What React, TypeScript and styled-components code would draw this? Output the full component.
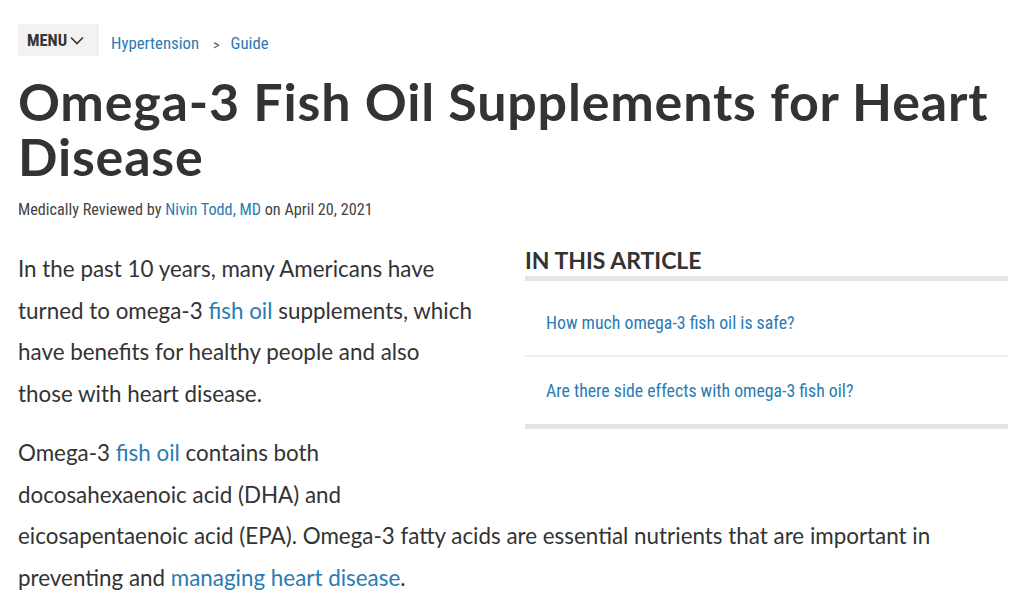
import React from "react";
import styled, { createGlobalStyle } from "styled-components";

const Global = createGlobalStyle`
  html, body { margin: 0; padding: 0; background: #fff; }
  body { font-family: "Lato", "Open Sans", sans-serif; color: #333; }
  a { text-decoration: none; color: #2a7bb3; }
`;

const cond = `"Roboto Condensed", "Roboto", sans-serif`;

const Page = styled.div`
  padding: 24px 16px 0 18px;
`;

const TopBar = styled.div`
  display: flex;
  align-items: center;
`;

const MenuButton = styled.button`
  display: flex;
  align-items: center;
  gap: 3px;
  height: 32px;
  width: 81px;
  padding: 0 0 0 9px;
  border: none;
  background: #f3f2f1;
  font-family: ${cond};
  font-weight: 700;
  font-size: 16.5px;
  color: #333;
  cursor: pointer;
`;

const Crumbs = styled.nav`
  display: flex;
  align-items: center;
  margin-left: 12px;
  font-family: ${cond};
  font-size: 16.8px;
  padding-top: 6px;
`;

const Sep = styled.span`
  margin: 3px 11px 0 14px;
  color: #555;
  font-size: 14px;
`;

const Title = styled.h1`
  margin: 18px 0 0;
  font-family: "Lato", "Open Sans", sans-serif;
  font-weight: 700;
  font-size: 52px;
  letter-spacing: 0.8px;
  line-height: 55px;
  color: #333;
`;

const Byline = styled.div`
  margin-top: 16px;
  font-family: ${cond};
  font-size: 16.2px;
  line-height: 20px;
  color: #444;
`;

const Article = styled.div`
  margin-top: 28px;
`;

const Toc = styled.aside`
  float: right;
  width: 483px;
  margin: -1px 0 46px 50px;
`;

const TocTitle = styled.h2`
  margin: 0;
  padding-bottom: 3px;
  font-family: "Lato", "Open Sans", sans-serif;
  font-weight: 700;
  font-size: 23px;
  line-height: 26px;
  color: #333;
  border-bottom: 5px solid #e6e5e5;
`;

const TocList = styled.ul`
  list-style: none;
  margin: 0;
  padding: 8px 0 0;
  border-bottom: 5px solid #e6e5e5;
`;

const TocItem = styled.li<{ $last?: boolean }>`
  padding: 24px 21px ${(p) => (p.$last ? "23px" : "22px")};
  border-bottom: ${(p) => (p.$last ? "none" : "2px solid #f0efef")};
  font-family: ${cond};
  font-size: 17.8px;
  line-height: 20px;
`;

const Para = styled.p`
  margin: 0 0 18px;
  font-size: 22.4px;
  line-height: 41.5px;
  color: #333;
`;

export default function App() {
  return (
    <>
      <Global />
      <Page>
        <TopBar>
          <MenuButton>
            MENU
            <svg width="14" height="9" viewBox="0 0 14 9" fill="none">
              <path d="M1 1.5 L7 7.5 L13 1.5" stroke="#333" strokeWidth="1.6" />
            </svg>
          </MenuButton>
          <Crumbs>
            <a href="#">Hypertension</a>
            <Sep>&gt;</Sep>
            <a href="#">Guide</a>
          </Crumbs>
        </TopBar>
        <Title>Omega-3 Fish Oil Supplements for Heart Disease</Title>
        <Byline>
          Medically Reviewed by <a href="#">Nivin Todd, MD</a> on April 20, 2021
        </Byline>
        <Article>
          <Toc>
            <TocTitle>IN THIS ARTICLE</TocTitle>
            <TocList>
              <TocItem>
                <a href="#">How much omega-3 fish oil is safe?</a>
              </TocItem>
              <TocItem $last>
                <a href="#">Are there side effects with omega-3 fish oil?</a>
              </TocItem>
            </TocList>
          </Toc>
          <Para>
            In the past 10 years, many Americans have turned to omega-3{" "}
            <a href="#">fish oil</a> supplements, which have benefits for healthy people and
            also those with heart disease.
          </Para>
          <Para>
            Omega-3 <a href="#">fish oil</a> contains both docosahexaenoic acid (DHA) and
            eicosapentaenoic acid (EPA). Omega-3 fatty acids are essential nutrients that are
            important in preventing and <a href="#">managing heart disease</a>.
          </Para>
        </Article>
      </Page>
    </>
  );
}
